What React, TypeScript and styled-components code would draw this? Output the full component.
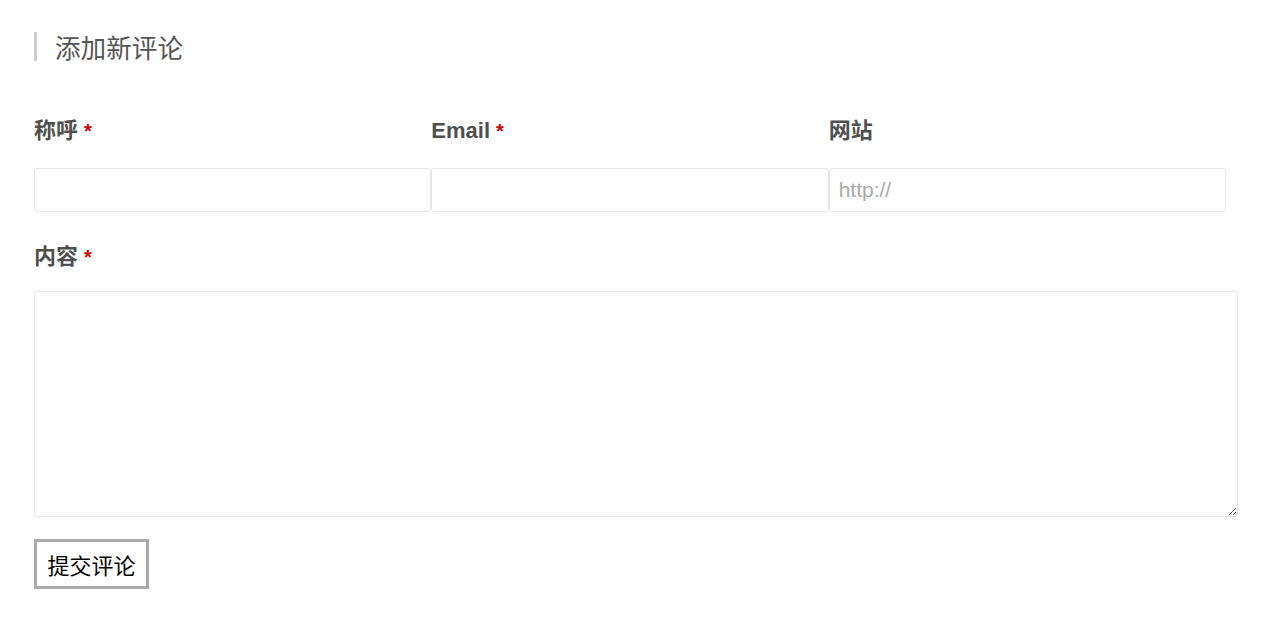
import React from "react";
import styled, { createGlobalStyle } from "styled-components";

const Global = createGlobalStyle`
  html, body { margin: 0; padding: 0; background: #fff; }
  body { font-family: "Liberation Sans", "Noto Sans CJK SC", sans-serif; color: #555; }
  * { box-sizing: border-box; }
`;

const Page = styled.div`
  padding: 32px 26px 0 34px;
`;

const Title = styled.h3`
  margin: 0;
  height: 29px;
  line-height: 29px;
  border-left: 3px solid #ccc;
  padding-left: 18px;
  font-family: "Noto Sans CJK SC", serif;
  font-weight: 400;
  font-size: 25.6px;
  color: #555;
`;

const Form = styled.form`
  display: flex;
  flex-direction: column;
  margin-top: 55px;
`;

const FieldRow = styled.div`
  display: flex;
`;

const Field = styled.div`
  width: 33%;
  display: flex;
  flex-direction: column;
`;

const Label = styled.label<{ $gap: number }>`
  display: block;
  height: 30px;
  line-height: 30px;
  font-size: 22px;
  font-weight: 700;
  color: #4f4f4f;
  margin-bottom: ${(p) => p.$gap}px;
  font-family: "Liberation Sans", "Noto Sans CJK SC", sans-serif;
`;

const Star = styled.span`
  color: #c00;
  font-size: 20px;
  margin-left: 6px;
`;

const Input = styled.input`
  width: 100%;
  height: 44px;
  border: 1px solid #e6e6e6;
  border-radius: 3px;
  padding: 0 9px;
  font-size: 21px;
  font-family: "Liberation Sans", sans-serif;
  color: #333;
  outline: none;
  &::placeholder { color: #aaa; }
`;

const Block = styled.div`
  margin-top: 30px;
`;

const TextArea = styled.textarea`
  display: block;
  width: 100%;
  height: 226px;
  border: 1px solid #e6e6e6;
  border-radius: 3px;
  outline: none;
  font-family: "Liberation Sans", sans-serif;
`;

const Submit = styled.button`
  align-self: flex-start;
  margin-top: 22px;
  height: 50px;
  width: 115px;
  border: 3px solid #aaa;
  background: #fff;
  color: #000;
  font-size: 22px;
  font-family: "Liberation Sans", "Noto Sans CJK SC", sans-serif;
  padding: 0;
  cursor: pointer;
`;

export default function App() {
  return (
    <>
      <Global />
      <Page>
        <Title>添加新评论</Title>
        <Form>
          <FieldRow>
            <Field>
              <Label $gap={22}>称呼<Star>*</Star></Label>
              <Input type="text" />
            </Field>
            <Field>
              <Label $gap={22}>Email<Star>*</Star></Label>
              <Input type="email" />
            </Field>
            <Field>
              <Label $gap={22}>网站</Label>
              <Input type="url" placeholder="http://" />
            </Field>
          </FieldRow>
          <Block>
            <Label $gap={19}>内容<Star>*</Star></Label>
            <TextArea />
          </Block>
          <Submit type="button">提交评论</Submit>
        </Form>
      </Page>
    </>
  );
}
